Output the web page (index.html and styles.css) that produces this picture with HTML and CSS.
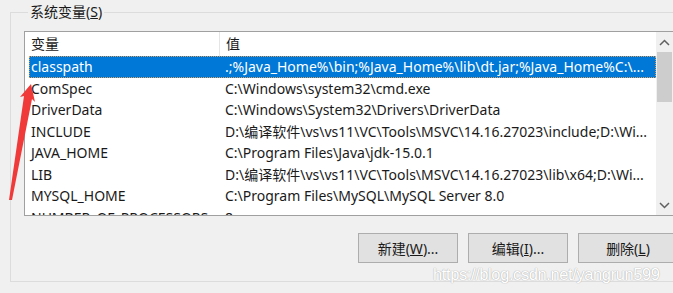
FILE: index.html
```html
<!DOCTYPE html>
<html lang="zh-CN">
<head>
  <meta charset="UTF-8">
  <title>环境变量</title>
  <link rel="stylesheet" href="styles.css">
</head>
<body>
  <fieldset class="group">
    <legend>系统变量(<u>S</u>)</legend>

    <div class="listbox">
      <div class="list">
        <div class="row head">
          <div class="col name">变量</div>
          <div class="col value">值</div>
        </div>
        <div class="row selected">
          <div class="col name">classpath</div>
          <div class="col value">.;%Java_Home%\bin;%Java_Home%\lib\dt.jar;%Java_Home%C:\...</div>
        </div>
        <div class="row">
          <div class="col name">ComSpec</div>
          <div class="col value">C:\Windows\system32\cmd.exe</div>
        </div>
        <div class="row">
          <div class="col name">DriverData</div>
          <div class="col value">C:\Windows\System32\Drivers\DriverData</div>
        </div>
        <div class="row">
          <div class="col name">INCLUDE</div>
          <div class="col value">D:\编译软件\vs\vs11\VC\Tools\MSVC\14.16.27023\include;D:\Wi...</div>
        </div>
        <div class="row">
          <div class="col name">JAVA_HOME</div>
          <div class="col value">C:\Program Files\Java\jdk-15.0.1</div>
        </div>
        <div class="row">
          <div class="col name">LIB</div>
          <div class="col value">D:\编译软件\vs\vs11\VC\Tools\MSVC\14.16.27023\lib\x64;D:\Wi...</div>
        </div>
        <div class="row">
          <div class="col name">MYSQL_HOME</div>
          <div class="col value">C:\Program Files\MySQL\MySQL Server 8.0</div>
        </div>
        <div class="row">
          <div class="col name">NUMBER_OF_PROCESSORS</div>
          <div class="col value">8</div>
        </div>
      </div>
      <div class="scrollbar">
        <div class="arrow up">
          <svg width="11" height="7" viewBox="0 0 11 7"><path d="M1 6 L5.5 1.5 L10 6" fill="none" stroke="#606060" stroke-width="1.5"/></svg>
        </div>
        <div class="thumb"></div>
        <div class="track"></div>
        <div class="arrow down">
          <svg width="11" height="7" viewBox="0 0 11 7"><path d="M1 1 L5.5 5.5 L10 1" fill="none" stroke="#606060" stroke-width="1.5"/></svg>
        </div>
      </div>
    </div>

    <div class="buttons">
      <button>新建(<u>W</u>)...</button>
      <button>编辑(<u>I</u>)...</button>
      <button>删除(<u>L</u>)</button>
    </div>
  </fieldset>

  <!-- annotation arrow -->
  <svg class="mark" width="40" height="120" viewBox="0 0 40 120">
    <polygon points="1,118 4,118 24,17 27,20 23,2 12,15 16,14" fill="#f03a3a"/>
  </svg>

  <div class="watermark">https://blog.csdn.net/yangrun599</div>
</body>
</html>
```

FILE: styles.css
```css
body {
  margin: 0;
  width: 673px;
  height: 293px;
  overflow: hidden;
  position: relative;
  background-color: #f0f0f0;
  font-family: "Noto Sans", "Noto Sans CJK SC", sans-serif;
  font-size: 14px;
  color: #1a1a1a;
}

.group {
  margin: 4px 0 0 10px;
  width: 700px;
  padding: 11px 0 17px 13px;
  border: 1px solid #dcdcdc;
  box-sizing: border-box;
  height: 278px;
}

.group legend {
  padding: 0 2px;
  margin-left: 4px;
  font-size: 14px;
  line-height: 16px;
}

.listbox {
  display: flex;
  width: 650px;
  height: 185px;
  border: 1px solid #a0a0a0;
  background-color: #fff;
  box-sizing: border-box;
  overflow: hidden;
}

.list {
  flex: 1;
  padding-left: 4px;
  overflow: hidden;
}

.row {
  display: flex;
  height: 21.5px;
  line-height: 21.5px;
  white-space: nowrap;
}

.row.head {
  height: 24px;
  line-height: 24px;
}

.col.name {
  width: 188px;
  padding-left: 2px;
  flex: none;
  overflow: hidden;
}

.col.value {
  padding-left: 6px;
  flex: 1;
}

.head .col.value {
  border-left: 1px solid #e5e5e5;
}

.row.selected {
  background-color: #0078d7;
  color: #fff;
  outline: 1px dotted #d8a060;
  outline-offset: -1px;
}

.scrollbar {
  width: 17px;
  flex: none;
  display: flex;
  flex-direction: column;
  background-color: #f0f0f0;
}

.arrow {
  height: 20px;
  display: flex;
  align-items: center;
  justify-content: center;
}

.thumb {
  height: 50px;
  background-color: #cdcdcd;
  margin: 0 1px;
}

.track {
  flex: 1;
}

.buttons {
  display: flex;
  gap: 10px;
  margin: 17px 0 0 334px;
}

.buttons button {
  width: 100px;
  height: 30px;
  flex: none;
  font-family: inherit;
  font-size: 14px;
  color: #1a1a1a;
  background-color: #e1e1e1;
  border: 1px solid #adadad;
  padding: 0;
}

.mark {
  position: absolute;
  left: 8px;
  top: 82px;
}

.watermark {
  position: absolute;
  left: 433px;
  top: 265px;
  font-family: "Liberation Sans", sans-serif;
  font-size: 16.5px;
  letter-spacing: -0.4px;
  color: #fff;
  text-shadow: 0 0 1px #b0b0b0, 0 0 1px #b0b0b0;
}
```
